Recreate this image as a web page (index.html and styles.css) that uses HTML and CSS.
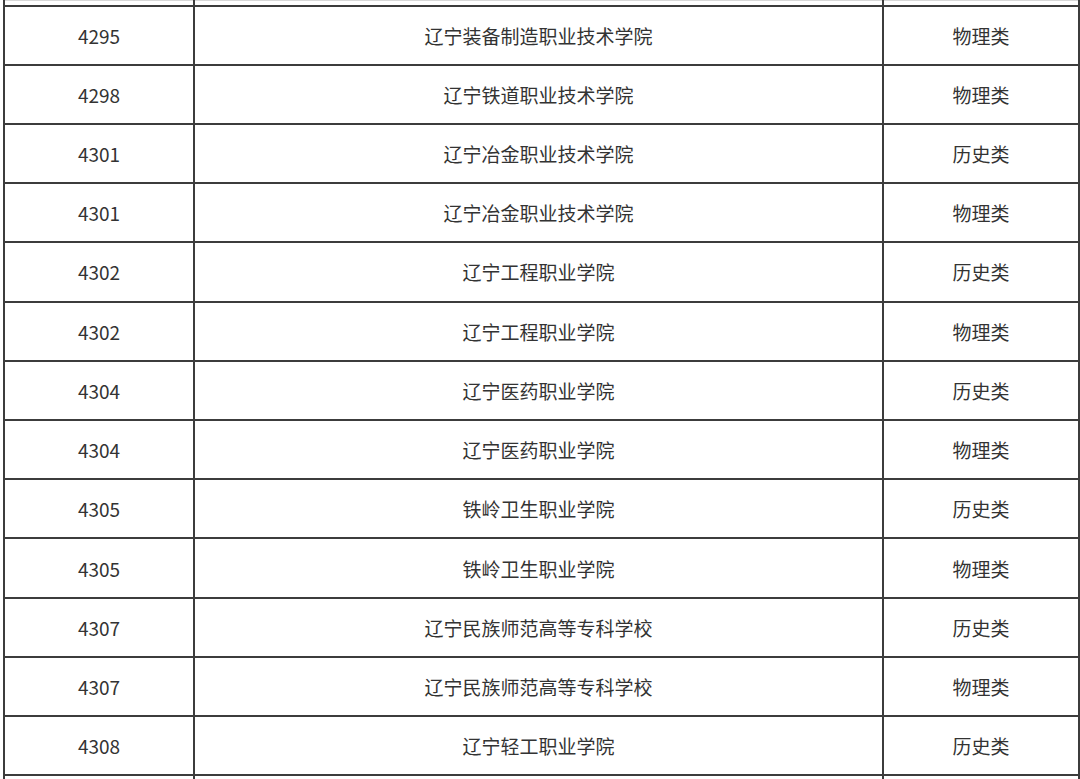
FILE: index.html
```html
<!DOCTYPE html>
<html lang="zh-CN">
<head>
<meta charset="utf-8">
<title>院校列表</title>
<link rel="stylesheet" href="styles.css">
</head>
<body>
<div class="page">
<table class="grid">
<colgroup><col class="c1"><col class="c2"><col class="c3"></colgroup>
<tbody>
<tr class="stub"><td></td><td></td><td></td></tr>
<tr><td>4295</td><td>辽宁装备制造职业技术学院</td><td>物理类</td></tr>
<tr><td>4298</td><td>辽宁铁道职业技术学院</td><td>物理类</td></tr>
<tr><td>4301</td><td>辽宁冶金职业技术学院</td><td>历史类</td></tr>
<tr><td>4301</td><td>辽宁冶金职业技术学院</td><td>物理类</td></tr>
<tr><td>4302</td><td>辽宁工程职业学院</td><td>历史类</td></tr>
<tr><td>4302</td><td>辽宁工程职业学院</td><td>物理类</td></tr>
<tr><td>4304</td><td>辽宁医药职业学院</td><td>历史类</td></tr>
<tr><td>4304</td><td>辽宁医药职业学院</td><td>物理类</td></tr>
<tr><td>4305</td><td>铁岭卫生职业学院</td><td>历史类</td></tr>
<tr><td>4305</td><td>铁岭卫生职业学院</td><td>物理类</td></tr>
<tr><td>4307</td><td>辽宁民族师范高等专科学校</td><td>历史类</td></tr>
<tr><td>4307</td><td>辽宁民族师范高等专科学校</td><td>物理类</td></tr>
<tr><td>4308</td><td>辽宁轻工职业学院</td><td>历史类</td></tr>
<tr class="stub"><td></td><td></td><td></td></tr>
</tbody>
</table>
</div>
</body>
</html>
```
FILE: styles.css
```css
html, body {
  margin: 0;
  padding: 0;
  background: #ffffff;
}
body {
  font-family: "Noto Sans CJK SC", "Noto Sans", sans-serif;
  color: #333333;
  overflow: hidden;
  height: 779px;
}
.page {
  padding-left: 3px;
  width: 1076px;
}
.grid {
  border-collapse: collapse;
  table-layout: fixed;
  width: 1075px;
}
.c1 { width: 190px; }
.c2 { width: 689px; }
.c3 { width: 196px; }
.grid td {
  border: 2px solid #3c3c3c;
  height: 59.23px;
  padding: 1px 0 0 0;
  text-align: center;
  vertical-align: middle;
  font-size: 19px;
  line-height: 24px;
  box-sizing: border-box;
}
.grid tr:first-child td {
  border-top: 1px solid #d8d8d8;
}
.grid tr.stub td {
  height: 5px;
  padding: 0;
}
```
